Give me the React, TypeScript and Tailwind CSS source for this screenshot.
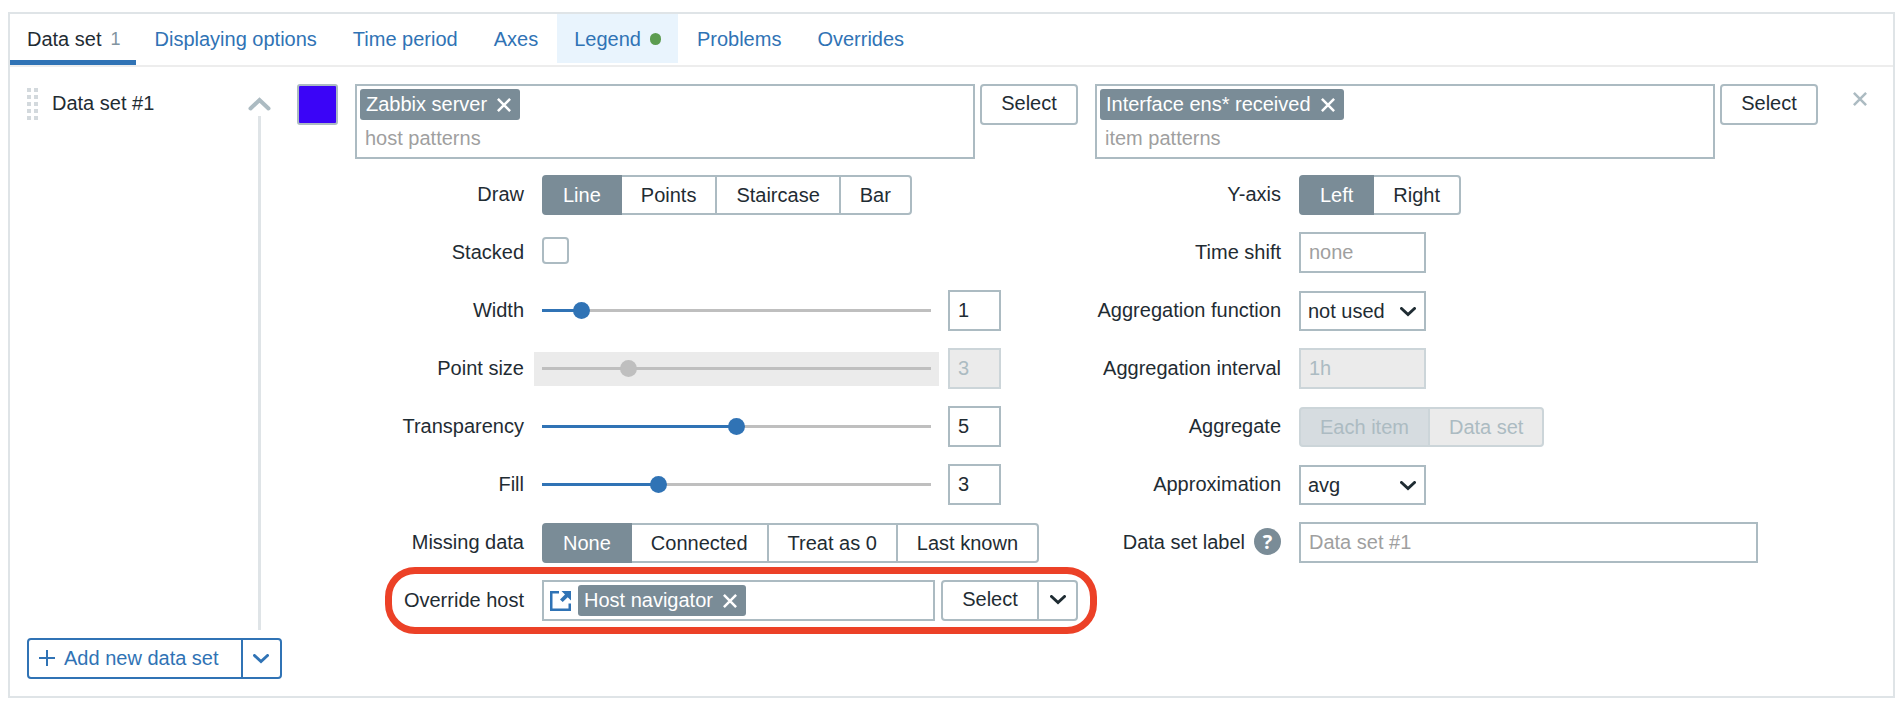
import { useId, useState } from "react";
import type { ReactNode } from "react";

const TABS = [
  { id: "dataset", label: "Data set", count: 1 },
  { id: "displaying", label: "Displaying options" },
  { id: "time", label: "Time period" },
  { id: "axes", label: "Axes" },
  { id: "legend", label: "Legend", changed: true },
  { id: "problems", label: "Problems" },
  { id: "overrides", label: "Overrides" }
];

function CrossIcon({ className }: { className: string }) {
  return (
    <svg viewBox="0 0 14 14" className={className} fill="none" stroke="currentColor" aria-hidden="true">
      <path d="M.9.9l12.2 12.2M13.1.9L.9 13.1" strokeWidth="2.5" />
    </svg>
  );
}

function ChevronIcon({ className }: { className: string }) {
  return (
    <svg viewBox="0 0 16 10" className={className} fill="none" stroke="currentColor" aria-hidden="true">
      <path d="M1.5 1.5L8 7.5l6.5-6" strokeWidth="3" strokeLinecap="round" />
    </svg>
  );
}

function ReferenceIcon() {
  return (
    <svg viewBox="0 0 21 20" className="h-5 w-[21px] flex-none text-[#3073b5]" fill="none" aria-hidden="true">
      <path d="M9 1.25H1.25v17.5h18.5V12.5" stroke="currentColor" strokeWidth="2.5" />
      <path d="M11.5 0H21v9.5l-3.3-3.3-5 4.9-2.7-2.7L15 3.4z" fill="currentColor" />
    </svg>
  );
}

function Chip({ children }: { children: string }) {
  return (
    <span className="inline-flex h-[31px] items-center gap-2.5 rounded-[3px] bg-[#7a8c97] pr-[9px] pl-1.5 text-white">
      <span className="pb-px">{children}</span>
      <button type="button" aria-label={`Remove ${children}`}>
        <CrossIcon className="h-[14px] w-[14px]" />
      </button>
    </span>
  );
}

function SelectButton() {
  return (
    <button
      type="button"
      className="h-[41px] w-[98px] flex-none rounded-[4px] border-2 border-[#acbbc2] bg-white pb-1"
    >
      Select
    </button>
  );
}

function PatternSelect({ value, placeholder }: { value: string; placeholder: string }) {
  return (
    <div className="flex min-w-0 flex-1 items-start gap-[5px]">
      <div className="flex h-[75px] min-w-0 flex-1 flex-col items-start border-2 border-[#acbbc2] bg-white px-[3px] pt-[3px]">
        <Chip>{value}</Chip>
        <input
          type="text"
          aria-label={placeholder}
          placeholder={placeholder}
          className="min-h-0 w-full flex-1 px-[5px] pb-0.5 outline-none placeholder:text-[#9f9f9f]"
        />
      </div>
      <SelectButton />
    </div>
  );
}

function Segmented({
  label,
  options,
  disabled = false
}: {
  label: string;
  options: string[];
  disabled?: boolean;
}) {
  const name = useId();
  const [selected, setSelected] = useState(options[0]);

  function colors(option: string) {
    if (disabled) {
      return option === selected
        ? "border-[#ccd5d9] bg-[#d6dce0] text-[#acbbc2]"
        : "border-[#ccd5d9] bg-[#ebebeb] text-[#acbbc2]";
    }
    return option === selected
      ? "z-10 border-[#7a8c97] bg-[#7a8c97] text-white"
      : "border-[#acbbc2] bg-white";
  }

  return (
    <div role="radiogroup" aria-label={label} className="flex pl-[2px]">
      {options.map((option) => (
        <label
          key={option}
          className={`relative -ml-[2px] flex h-10 items-center border-2 px-[19px] whitespace-nowrap first:rounded-l-[4px] last:rounded-r-[4px] ${colors(option)}`}
        >
          <input
            type="radio"
            name={name}
            className="sr-only"
            checked={option === selected}
            disabled={disabled}
            onChange={() => setSelected(option)}
          />
          {option}
        </label>
      ))}
    </div>
  );
}

function RangeField({
  id,
  initial,
  min = 0,
  disabled = false
}: {
  id: string;
  initial: number;
  min?: number;
  disabled?: boolean;
}) {
  const [value, setValue] = useState(initial);
  const percent = ((value - min) / (10 - min)) * 100;

  return (
    <div className="flex items-center gap-[17px]">
      <div className="relative flex h-[34px] w-[389px] items-center">
        {disabled ? <div className="absolute inset-y-0 -inset-x-2 bg-[#ebebeb]" /> : null}
        <div className="relative h-[3px] w-full bg-[#bfbfbf]">
          {disabled ? null : <div className="h-full bg-[#3073b5]" style={{ width: `${percent}%` }} />}
        </div>
        <input
          type="range"
          aria-label={id}
          min={min}
          max={10}
          value={value}
          disabled={disabled}
          onChange={(event) => setValue(Number(event.target.value))}
          className="absolute inset-y-0 -left-2 w-[405px] appearance-none bg-transparent [&::-webkit-slider-thumb]:h-[17px] [&::-webkit-slider-thumb]:w-[17px] [&::-webkit-slider-thumb]:appearance-none [&::-webkit-slider-thumb]:rounded-full [&::-webkit-slider-thumb]:bg-[#3073b5] disabled:[&::-webkit-slider-thumb]:bg-[#bfbfbf]"
        />
      </div>
      <input
        id={id}
        type="text"
        value={value}
        disabled={disabled}
        onChange={(event) => setValue(Number(event.target.value) || min)}
        className="h-[41px] w-[53px] border-2 border-[#acbbc2] bg-white px-2 disabled:border-[#ccd5d9] disabled:bg-[#ebebeb] disabled:text-[#acbbc2]"
      />
    </div>
  );
}

function Dropdown({ id, options }: { id: string; options: string[] }) {
  return (
    <div className="relative w-[127px]">
      <select id={id} className="h-10 w-full appearance-none border-2 border-[#acbbc2] bg-white px-[7px]">
        {options.map((option) => (
          <option key={option}>{option}</option>
        ))}
      </select>
      <ChevronIcon className="pointer-events-none absolute top-4 right-2.5 h-[10px] w-4" />
    </div>
  );
}

function Field({ label, htmlFor, children }: { label: ReactNode; htmlFor?: string; children: ReactNode }) {
  return (
    <>
      <label htmlFor={htmlFor} className="flex items-center justify-end gap-[9px] pb-0.5 whitespace-nowrap">
        {label}
      </label>
      <div className="flex min-w-0 items-center">{children}</div>
    </>
  );
}

export default function App() {
  const [activeTab, setActiveTab] = useState("dataset");

  return (
    <div className="bg-white pt-3 pr-[7px] pb-2.5 pl-2 font-['Liberation_Sans',Arial,sans-serif] text-[20px] leading-6 text-[#1f2c33]">
      <div className="border-2 border-[#dfe4e7]">
        <nav className="flex gap-0.5 border-b-2 border-[#ededed]">
          {TABS.map((tab) => (
            <a
              key={tab.id}
              href={`#${tab.id}`}
              onClick={() => setActiveTab(tab.id)}
              className={`flex h-[51px] items-center gap-[9px] pt-[3px] pl-[17px] whitespace-nowrap ${
                tab.id === activeTab
                  ? "border-b-5 border-[#3073b5]"
                  : "border-b-2 border-transparent bg-clip-padding pb-[3px] text-[#3073b5]"
              } ${tab.count ? "pr-[15px]" : "pr-[17px]"} ${tab.changed ? "bg-[#e9f4fd]" : ""}`}
            >
              {tab.label}
              {tab.count ? <span className="text-[18px] text-[#8294a0]">{tab.count}</span> : null}
              {tab.changed ? <span className="h-3 w-[11px] rounded-full bg-[#5c9c50]" /> : null}
            </a>
          ))}
        </nav>

        <div className="p-[17px]">
          <div className="flex">
            <div className="flex w-[221px] flex-none items-start pt-[3px]">
              <button type="button" aria-label="Drag" className="grid grid-cols-2 gap-[3px] pt-[1px]">
                {Array.from({ length: 10 }, (_, i) => (
                  <span key={i} className="h-1 w-1 bg-[#d3d9dd]" />
                ))}
              </button>
              <span className="pt-1 pl-[14px]">Data set #1</span>
            </div>
            <div className="flex w-[23px] flex-none flex-col items-center gap-[5px] pt-[13px]">
              <button type="button" aria-label="Collapse">
                <svg viewBox="0 0 23 14" className="h-[14px] w-[23px]" fill="none" aria-hidden="true">
                  <path d="M2.5 11.5l9-8.5 9 8.5" stroke="#acbbc2" strokeWidth="4" strokeLinecap="round" />
                </svg>
              </button>
              <div className="w-[3px] flex-1 bg-[#dfe4e7]" />
            </div>
            <button
              type="button"
              aria-label="Color"
              className="ml-[26px] h-[41px] w-[41px] flex-none rounded-[3px] border-2 border-[#acbbc2] bg-[#3b04f7]"
            />

            <div className="ml-[17px] min-w-0 flex-1 pb-[9px]">
              <div className="flex gap-[17px]">
                <PatternSelect value="Zabbix server" placeholder="host patterns" />
                <PatternSelect value="Interface ens* received" placeholder="item patterns" />
              </div>

              <div className="mt-[15px] grid grid-cols-2 gap-x-[17px]">
                <div className="relative grid auto-rows-[41px] grid-cols-[169px_1fr] gap-x-[18px] gap-y-[17px]">
                  <Field label="Draw">
                    <Segmented label="Draw" options={["Line", "Points", "Staircase", "Bar"]} />
                  </Field>
                  <Field label="Stacked" htmlFor="stacked">
                    <input
                      id="stacked"
                      type="checkbox"
                      className="mb-1 h-[27px] w-[27px] appearance-none rounded-[4px] border-2 border-[#acbbc2] bg-white checked:bg-[#3073b5]"
                    />
                  </Field>
                  <Field label="Width" htmlFor="width">
                    <RangeField id="width" initial={1} />
                  </Field>
                  <Field label="Point size" htmlFor="point-size">
                    <RangeField id="point-size" initial={3} min={1} disabled />
                  </Field>
                  <Field label="Transparency" htmlFor="transparency">
                    <RangeField id="transparency" initial={5} />
                  </Field>
                  <Field label="Fill" htmlFor="fill">
                    <RangeField id="fill" initial={3} />
                  </Field>
                  <Field label="Missing data">
                    <Segmented
                      label="Missing data"
                      options={["None", "Connected", "Treat as 0", "Last known"]}
                    />
                  </Field>
                  <Field label="Override host" htmlFor="override-host">
                    <div className="flex h-[41px] min-w-0 flex-1 items-center border-2 border-[#acbbc2] bg-white pl-1.5">
                      <ReferenceIcon />
                      <span className="ml-[7px] flex flex-none">
                        <Chip>Host navigator</Chip>
                      </span>
                      <input id="override-host" type="text" className="min-w-0 flex-1 outline-none" />
                    </div>
                    <div className="ml-1.5 flex h-[41px] flex-none rounded-[4px] border-2 border-[#acbbc2] bg-white">
                      <button type="button" className="w-[94px] pb-1">
                        Select
                      </button>
                      <button
                        type="button"
                        aria-label="More"
                        className="flex w-[39px] items-center justify-center border-l-2 border-[#acbbc2] pb-0.5"
                      >
                        <ChevronIcon className="h-[10px] w-4" />
                      </button>
                    </div>
                  </Field>
                  <div className="pointer-events-none absolute -right-[19px] -bottom-[13px] left-[30px] h-[67px] rounded-[30px] border-7 border-[#ec4127]" />
                </div>

                <div className="grid auto-rows-[41px] grid-cols-[186px_1fr] content-start gap-x-[18px] gap-y-[17px]">
                  <Field label="Y-axis">
                    <Segmented label="Y-axis" options={["Left", "Right"]} />
                  </Field>
                  <Field label="Time shift" htmlFor="time-shift">
                    <input
                      id="time-shift"
                      type="text"
                      placeholder="none"
                      className="h-[41px] w-[127px] border-2 border-[#acbbc2] bg-white px-2 placeholder:text-[#9f9f9f]"
                    />
                  </Field>
                  <Field label="Aggregation function" htmlFor="aggregation-function">
                    <Dropdown id="aggregation-function" options={["not used", "min", "max", "avg"]} />
                  </Field>
                  <Field label="Aggregation interval" htmlFor="aggregation-interval">
                    <input
                      id="aggregation-interval"
                      type="text"
                      placeholder="1h"
                      disabled
                      className="h-[41px] w-[127px] border-2 border-[#ccd5d9] bg-[#ebebeb] px-2 placeholder:text-[#acbbc2]"
                    />
                  </Field>
                  <Field label="Aggregate">
                    <Segmented label="Aggregate" options={["Each item", "Data set"]} disabled />
                  </Field>
                  <Field label="Approximation" htmlFor="approximation">
                    <Dropdown id="approximation" options={["avg", "min", "max", "all"]} />
                  </Field>
                  <Field
                    label={
                      <>
                        Data set label
                        <span className="flex h-[27px] w-[27px] items-center justify-center rounded-full bg-[#7a8c97] font-['Open_Sans',sans-serif] font-bold text-white">
                          ?
                        </span>
                      </>
                    }
                    htmlFor="data-set-label"
                  >
                    <input
                      id="data-set-label"
                      type="text"
                      placeholder="Data set #1"
                      className="mr-[60px] h-[41px] min-w-0 flex-1 border-2 border-[#acbbc2] bg-white px-2 placeholder:text-[#9f9f9f]"
                    />
                  </Field>
                </div>
              </div>
            </div>

            <button type="button" aria-label="Delete" className="mt-2 mr-[9px] ml-[35px] self-start text-[#acbbc2]">
              <CrossIcon className="h-[14px] w-[14px]" />
            </button>
          </div>

          <div className="mt-2 inline-flex h-[41px] rounded-[4px] border-2 border-[#3073b5] align-top text-[#3073b5]">
            <button type="button" className="flex items-center gap-[9px] pr-[22px] pb-0.5 pl-2.5">
              <svg viewBox="0 0 16 16" className="h-4 w-4" fill="none" stroke="currentColor" aria-hidden="true">
                <path d="M8 0v16M0 8h16" strokeWidth="2" />
              </svg>
              Add new data set
            </button>
            <button
              type="button"
              aria-label="Add options"
              className="flex w-[39px] items-center justify-center border-l-2 border-[#3073b5]"
            >
              <ChevronIcon className="h-[10px] w-4" />
            </button>
          </div>
        </div>
      </div>
    </div>
  );
}
